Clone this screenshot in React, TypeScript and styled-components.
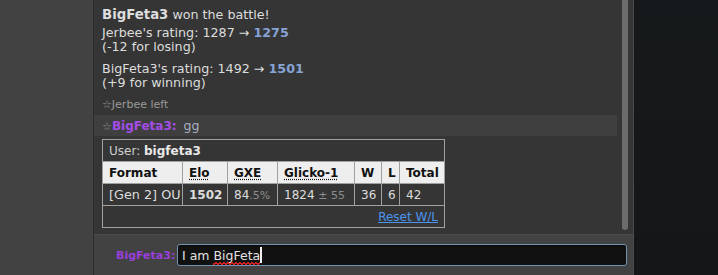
import React from 'react';
import styled, { createGlobalStyle } from 'styled-components';

const GlobalStyle = createGlobalStyle`
  html, body {
    margin: 0;
    padding: 0;
    background: #151819;
  }
  body {
    font-family: "DejaVu Sans", Verdana, sans-serif;
    font-size: 12px;
    color: #dddddd;
  }
`;

const Page = styled.div`
  display: flex;
  width: 718px;
  height: 275px;
  overflow: hidden;
`;

const SideStrip = styled.div`
  width: 93px;
  flex: 0 0 93px;
  background: #424242;
  border-right: 1px solid #2c2c2c;
`;

const ChatPanel = styled.div`
  width: 539px;
  flex: 0 0 539px;
  display: flex;
  flex-direction: column;
  border-right: 1px solid #4a4a4a;
`;

const LogArea = styled.div`
  height: 234px;
  display: flex;
  background: #353535;
  border-bottom: 1px solid #4c4c4c;
`;

const Log = styled.div`
  flex: 1;
  padding-top: 8px;
`;

const ScrollTrack = styled.div`
  width: 16px;
  flex: 0 0 16px;
  display: flex;
  justify-content: center;
  box-sizing: border-box;
`;

const ScrollThumb = styled.div`
  width: 6px;
  height: 230px;
  background: #6c6c6c;
  border-radius: 0 0 3px 3px;
`;

const Block = styled.div<{ $gap?: number }>`
  padding: 0 8px;
  font-size: 12.7px;
  line-height: 14px;
  margin-bottom: ${(p) => p.$gap ?? 8}px;
`;

const Winner = styled.strong`
  font-size: 13.3px;
`;

const Line = styled.div``;

const Rating = styled.strong`
  color: #87a3d6;
`;

const Notice = styled.div`
  padding: 0 8px;
  font-size: 11px;
  line-height: 14px;
  color: #9a9a9a;
  margin-bottom: 3px;
`;

const ChatLine = styled.div`
  background: #3f3f3f;
  padding: 0 8px;
  height: 21px;
  line-height: 22px;
  font-size: 12px;
`;

const Star = styled.span`
  color: #8c8c8c;
  font-size: 11px;
`;

const Username = styled.strong`
  color: #a44de8;
`;

const Message = styled.span`
  color: #a9b0c4;
  margin-left: 7px;
  font-size: 12.5px;
`;

const TableWrap = styled.div`
  padding: 3px 8px 0;
`;

const Table = styled.table`
  border-collapse: collapse;
  width: 342px;
  table-layout: fixed;
  font-size: 12px;

  td,
  th {
    border: 1px solid #a0a0a0;
    height: 21px;
    padding: 0 6px;
    white-space: nowrap;
    text-align: left;
  }
`;

const UserCell = styled.td`
  color: #cfcfcf;

  strong {
    color: #e8e8e8;
  }
`;

const HeadCell = styled.th`
  background: #eeeeee;
  color: #111111;
  font-weight: bold;

  abbr {
    text-decoration: underline dotted;
    text-underline-offset: 2px;
  }
`;

const DataCell = styled.td<{ $bold?: boolean; $wide?: boolean }>`
  font-weight: ${(p) => (p.$bold ? 'bold' : 'normal')};
  font-size: ${(p) => (p.$wide ? '12.8px' : '12px')};
  color: #dddddd;
`;

const Faint = styled.small`
  color: #8d8d8d;
  font-size: 11px;
`;

const ResetCell = styled.td`
  text-align: right !important;

  a {
    color: #4a94ee;
    text-decoration: underline;
  }
`;

const InputArea = styled.div`
  flex: 1;
  background: #424242;
  display: flex;
  align-items: center;
  padding: 0 6px 0 22px;
  gap: 4px;
`;

const InputLabel = styled.strong`
  color: #9a3fdc;
  font-size: 11px;
  width: 57px;
  text-align: right;
`;

const TextBox = styled.div`
  width: 450px;
  height: 22px;
  box-sizing: border-box;
  background: #111111;
  border: 1px solid #7592ae;
  border-radius: 3px;
  box-shadow: inset 0 1px 2px rgba(0, 0, 0, 0.6);
  display: flex;
  align-items: center;
  padding-left: 4px;
  font-size: 12.5px;
  color: #e2e2e2;
`;

// spellcheck squiggle drawn under the word
const Misspelled = styled.span`
  position: relative;

  &::after {
    content: '';
    position: absolute;
    left: 0;
    right: 0;
    bottom: -2px;
    height: 3px;
    background:
      linear-gradient(135deg, transparent 40%, #d02020 40%, #d02020 65%, transparent 65%) 0 0 / 4px 3px repeat-x,
      linear-gradient(45deg, transparent 40%, #d02020 40%, #d02020 65%, transparent 65%) 2px 0 / 4px 3px repeat-x;
  }
`;

const Caret = styled.span`
  display: inline-block;
  width: 2px;
  height: 16px;
  background: #f0f0f0;
`;

const RightBackdrop = styled.div`
  flex: 1;
  background: linear-gradient(180deg, #171a1c 0%, #141617 100%);
`;

const App: React.FC = () => {
  return (
    <>
      <GlobalStyle />
      <Page>
        <SideStrip />
        <ChatPanel>
          <LogArea>
            <Log>
              <Block $gap={4}>
                <Winner>BigFeta3</Winner> won the battle!
              </Block>
              <Block>
                <Line>
                  Jerbee's rating: 1287 &rarr; <Rating>1275</Rating>
                </Line>
                <Line>(-12 for losing)</Line>
              </Block>
              <Block>
                <Line>
                  BigFeta3's rating: 1492 &rarr; <Rating>1501</Rating>
                </Line>
                <Line>(+9 for winning)</Line>
              </Block>
              <Notice>☆Jerbee left</Notice>
              <ChatLine>
                <Star>☆</Star>
                <Username>BigFeta3:</Username>
                <Message>gg</Message>
              </ChatLine>
              <TableWrap>
                <Table>
                  <colgroup>
                    <col style={{ width: 80 }} />
                    <col style={{ width: 45 }} />
                    <col style={{ width: 50 }} />
                    <col style={{ width: 77 }} />
                    <col style={{ width: 27 }} />
                    <col style={{ width: 18 }} />
                    <col style={{ width: 45 }} />
                  </colgroup>
                  <tbody>
                    <tr>
                      <UserCell colSpan={7}>
                        User: <strong>bigfeta3</strong>
                      </UserCell>
                    </tr>
                    <tr>
                      <HeadCell>Format</HeadCell>
                      <HeadCell>
                        <abbr>Elo</abbr>
                      </HeadCell>
                      <HeadCell>
                        <abbr>GXE</abbr>
                      </HeadCell>
                      <HeadCell>
                        <abbr>Glicko-1</abbr>
                      </HeadCell>
                      <HeadCell>W</HeadCell>
                      <HeadCell>L</HeadCell>
                      <HeadCell>Total</HeadCell>
                    </tr>
                    <tr>
                      <DataCell $wide>[Gen 2] OU</DataCell>
                      <DataCell $bold>1502</DataCell>
                      <DataCell>
                        84<Faint>.5%</Faint>
                      </DataCell>
                      <DataCell>
                        1824 <Faint>± 55</Faint>
                      </DataCell>
                      <DataCell>36</DataCell>
                      <DataCell>6</DataCell>
                      <DataCell>42</DataCell>
                    </tr>
                    <tr>
                      <ResetCell colSpan={7}>
                        <a href="#reset">Reset W/L</a>
                      </ResetCell>
                    </tr>
                  </tbody>
                </Table>
              </TableWrap>
            </Log>
            <ScrollTrack>
              <ScrollThumb />
            </ScrollTrack>
          </LogArea>
          <InputArea>
            <InputLabel>BigFeta3:</InputLabel>
            <TextBox>
              I am&nbsp;<Misspelled>BigFeta</Misspelled>
              <Caret />
            </TextBox>
          </InputArea>
        </ChatPanel>
        <RightBackdrop />
      </Page>
    </>
  );
};

export default App;
